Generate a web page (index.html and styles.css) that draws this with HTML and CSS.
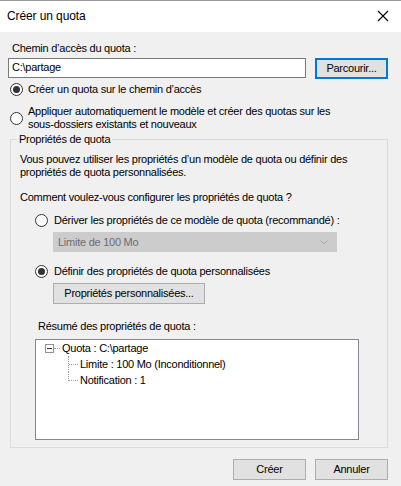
FILE: index.html
```html
<!DOCTYPE html>
<html lang="fr">
<head>
<meta charset="utf-8">
<title>Créer un quota</title>
<link rel="stylesheet" href="styles.css">
</head>
<body>
<div class="window">
  <div class="titlebar">
    <span class="title">Créer un quota</span>
    <svg class="close" width="12" height="12" viewBox="0 0 12 12"><path d="M1 1 L11 11 M11 1 L1 11" stroke="#000" stroke-width="1.1" fill="none"/></svg>
  </div>
  <div class="content">
    <div class="label first">Chemin d’accès du quota :</div>
    <div class="path-row">
      <div class="input">C:\partage</div>
      <div class="btn btn-default">Parcourir...</div>
    </div>
    <div class="radio-row r1"><span class="radio checked"></span><span class="rtext">Créer un quota sur le chemin d’accès</span></div>
    <div class="radio-row r2"><span class="radio"></span><span class="rtext">Appliquer automatiquement le modèle et créer des quotas sur les<br>sous-dossiers existants et nouveaux</span></div>
    <fieldset class="group">
      <legend>Propriétés de quota</legend>
      <div class="para">Vous pouvez utiliser les propriétés d’un modèle de quota ou définir des<br>propriétés de quota personnalisées.</div>
      <div class="para q">Comment voulez-vous configurer les propriétés de quota ?</div>
      <div class="radio-row r3"><span class="radio"></span><span class="rtext">Dériver les propriétés de ce modèle de quota (recommandé) :</span></div>
      <div class="combo"><span>Limite de 100 Mo</span><svg width="8" height="5" viewBox="0 0 8 5"><path d="M0.5 0.5 L4 4 L7.5 0.5" stroke="#a8a8a8" fill="none"/></svg></div>
      <div class="radio-row r4"><span class="radio checked"></span><span class="rtext">Définir des propriétés de quota personnalisées</span></div>
      <div class="btn btn-props">Propriétés personnalisées...</div>
      <div class="para summary-label">Résumé des propriétés de quota :</div>
      <div class="tree">
        <div class="node-root"><span class="expander"></span><span class="hconn"></span><span class="ntext">Quota : C:\partage</span></div>
        <div class="children">
          <div class="child"><span class="ntext">Limite : 100 Mo (Inconditionnel)</span></div>
          <div class="child"><span class="ntext">Notification : 1</span></div>
        </div>
      </div>
    </fieldset>
    <div class="footer">
      <div class="btn btn-foot">Créer</div>
      <div class="btn btn-foot">Annuler</div>
    </div>
  </div>
</div>
</body>
</html>
```
FILE: styles.css
```css
* { box-sizing: border-box; }
html, body { margin: 0; padding: 0; }
body {
  background: #f0f0f0;
  font-family: "Liberation Sans", Arial, sans-serif;
  font-size: 11px;
  line-height: 13px;
  letter-spacing: -0.25px;
  color: #000;
}
.window {
  width: 401px;
  height: 486px;
  background: #f0f0f0;
  overflow: hidden;
}
.titlebar {
  height: 32px;
  background: #fff;
  border-top: 1px solid #9a9a9a;
  display: flex;
  align-items: center;
  padding: 0 12px 0 7px;
}
.title {
  font-size: 12px;
  letter-spacing: -0.1px;
  flex: 1;
  padding-bottom: 1px;
}
.close { margin-top: -2px; }
.content {
  padding: 0 13px 0 8px;
}
.label.first { margin: 10px 0 0 4px; }
.path-row {
  display: flex;
  margin-top: 3px;
  height: 21px;
}
.input {
  width: 298px;
  height: 20px;
  background: #fff;
  border: 1px solid #7a7a7a;
  padding: 2px 3px 0;
}
.btn {
  background: #e1e1e1;
  border: 1px solid #adadad;
  height: 21px;
  display: flex;
  align-items: center;
  justify-content: center;
  padding-bottom: 1px;
}
.btn-default {
  margin-left: auto;
  width: 73px;
  border: 2px solid #0078d7;
}
.radio-row {
  display: flex;
  align-items: center;
}
.radio {
  width: 13px;
  height: 13px;
  border: 1px solid #333;
  border-radius: 50%;
  background: #fff;
  flex: none;
  display: flex;
  align-items: center;
  justify-content: center;
}
.radio.checked::after {
  content: "";
  width: 7px;
  height: 7px;
  border-radius: 50%;
  background: #333;
}
.rtext { margin-left: 5px; }
.r1 { margin: 4px 0 0 2px; height: 13px; }
.r2 { margin: 9px 0 0 2px; }
.group {
  margin: 2px 0 0 2px;
  padding: 7px 6px 7px 6px;
  border: 1px solid #dcdcdc;
  min-width: 0;
}
.group legend {
  padding: 0 2px;
  line-height: 13px;
}
.para { margin-left: 3px; }
.para.q { margin-top: 12px; }
.r3 { margin: 10px 0 0 18px; height: 13px; }
.r3 .rtext, .r4 .rtext { margin-left: 6px; }
.combo {
  margin: 5px 0 0 36px;
  width: 284px;
  height: 20px;
  background: #cccccc;
  border: 1px solid #cccccc;
  color: #6d6d6d;
  display: flex;
  align-items: center;
  justify-content: space-between;
  padding: 0 8px 0 4px;
}
.r4 { margin: 13px 0 0 18px; height: 13px; }
.btn-props {
  margin: 5px 0 0 36px;
  width: 152px;
}
.summary-label { margin: 16px 0 0 21px; }
.tree {
  margin: 6px 0 0 18px;
  width: 324px;
  height: 101px;
  background: #fff;
  border: 1px solid #828790;
  padding-top: 0;
}
.node-root {
  display: flex;
  align-items: center;
  height: 16px;
  padding-left: 9px;
}
.expander {
  width: 9px;
  height: 9px;
  border: 1px solid #919191;
  background: #fff;
  display: flex;
  align-items: center;
  justify-content: center;
  flex: none;
}
.expander::after {
  content: "";
  width: 5px;
  height: 1px;
  background: #333;
}
.hconn {
  width: 6px;
  border-top: 1px dotted #a0a0a0;
  margin-left: 0;
}
.node-root .ntext { margin-left: 2px; }
.children { margin-left: 32px; }
.child {
  position: relative;
  display: flex;
  align-items: center;
  height: 16px;
  padding-left: 12px;
}
.child::before {
  content: "";
  position: absolute;
  left: 0;
  top: 0;
  height: 16px;
  border-left: 1px dotted #a0a0a0;
}
.child:last-child::before { height: 9px; }
.child::after {
  content: "";
  position: absolute;
  left: 1px;
  top: 8px;
  width: 9px;
  border-top: 1px dotted #a0a0a0;
}
.footer {
  display: flex;
  justify-content: flex-end;
  gap: 9px;
  margin-top: 11px;
}
.btn-foot { width: 73px; }
```
